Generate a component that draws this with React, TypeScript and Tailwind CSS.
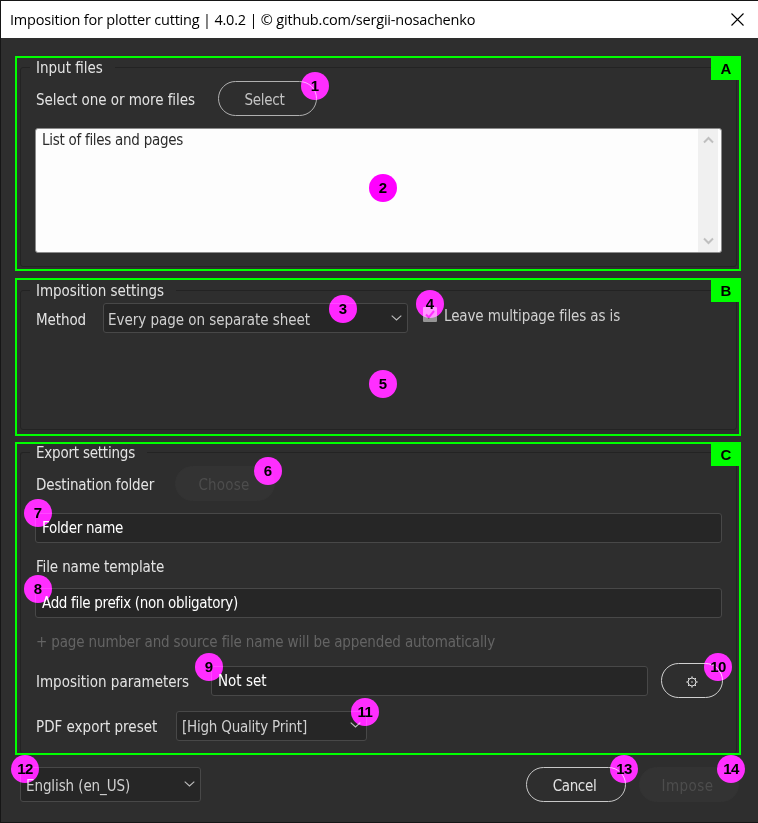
import type { ReactNode } from "react";

function Badge({ n, pos, solid }: { n: number; pos: string; solid?: boolean }) {
  return (
    <>
      <span className={`absolute size-7 rounded-full bg-[#ff00ff] ${solid ? "" : "mix-blend-screen"} ${pos}`} />
      <span
        className={`absolute flex size-7 items-center justify-center pb-px font-['Liberation_Sans',Arial,sans-serif] text-[15px] leading-none font-bold text-black ${n > 9 ? "tracking-[-0.5px]" : ""} ${pos}`}
      >
        {n}
      </span>
    </>
  );
}

function Frame({ tag, title, titleClass, className, boxClass, children }: {
  tag: string;
  title: string;
  titleClass: string;
  className: string;
  boxClass: string;
  children: ReactNode;
}) {
  return (
    <section className={`relative ml-[14px] w-[726px] border-2 border-[#00ff00] ${className}`}>
      <fieldset className={`ml-[3px] w-[717px] rounded-[3px] border border-[#232323] pl-[15px] ${boxClass}`}>
        <legend className={`-ml-[6px] h-4 bg-[#2e2e2e] pr-3 pl-[6px] leading-[18px] whitespace-nowrap ${titleClass}`}>{title}</legend>
        {children}
      </fieldset>
      <span className="absolute -top-[2px] -right-[2px] flex h-6 w-[30px] items-center justify-center bg-[#00ff00] font-['Liberation_Sans',Arial,sans-serif] text-[15px] leading-none font-bold text-black">
        {tag}
      </span>
    </section>
  );
}

function Chevron({ className = "" }: { className?: string }) {
  return (
    <svg width="11" height="6" viewBox="0 0 11 6" className={className} fill="none" stroke="#bdbdbd" strokeWidth="1.1">
      <path d="M0.7 0.6 L5.5 5 L10.3 0.6" />
    </svg>
  );
}

const field = "flex items-center rounded-[3px] border border-[#484848] bg-[#262626]";
const pill = "flex h-[35px] items-center justify-center rounded-full border pt-[3px]";

export default function App() {
  return (
    <div className="relative flex h-[823px] w-[758px] flex-col overflow-hidden border-t border-b border-l border-[#161616] bg-[#2e2e2e] font-['DejaVu_Sans_Condensed','DejaVu_Sans',sans-serif] text-[15px] leading-5 whitespace-nowrap text-[#e3e3e3]">
      <header className="flex h-[37px] shrink-0 items-center justify-between bg-white pr-[14px] pl-[9px] text-black">
        <h1 className="font-['Open_Sans',sans-serif] text-[14.5px] tracking-[-0.19px]">
          Imposition for plotter cutting | 4.0.2 | © github.com/sergii-nosachenko
        </h1>
        <svg width="13" height="13" viewBox="0 0 13 13" fill="none" stroke="#000" strokeWidth="1.1">
          <path d="M0.5 0.5 L12.5 12.5 M12.5 0.5 L0.5 12.5" />
        </svg>
      </header>

      <Frame tag="A" title="Input files" titleClass="" className="mt-[18px] h-[215px] pt-px" boxClass="h-[208px]">
        <div className="mt-[6px] flex items-center">
          <span className="w-[182px] pt-[3px] tracking-[-0.05px]">Select one or more files</span>
          <button className={`${pill} w-[99px] border-[#b0b0b0] pr-[6px] text-[#c4c4c4] tracking-[-0.25px]`}>Select</button>
        </div>
        <div className="mt-3 -ml-px flex h-[125px] w-[687px] justify-between rounded-[3px] border border-[#8b8b8b] bg-[#fdfdfd]">
          <span className="pt-px pl-[6px] text-[#2b2b2b] tracking-[-0.28px]">List of files and pages</span>
          <div className="mr-[3px] flex w-5 flex-col items-center justify-between bg-[#f0f0f0] py-[7px] text-[#bfbfbf]">
            <svg width="11" height="8" viewBox="0 0 11 8" fill="none" stroke="currentColor" strokeWidth="2">
              <path d="M1 6.5 L5.5 2 L10 6.5" />
            </svg>
            <svg width="11" height="8" viewBox="0 0 11 8" fill="none" stroke="currentColor" strokeWidth="2">
              <path d="M1 1.5 L5.5 6 L10 1.5" />
            </svg>
          </div>
        </div>
      </Frame>

      <Frame tag="B" title="Imposition settings" titleClass="tracking-[-0.04px]" className="mt-[7px] h-[158px] pt-[2px]" boxClass="h-[148px]">
        <div className="mt-[5px] flex items-start">
          <span className="w-[67px] pt-[7px] tracking-[-0.1px]">Method</span>
          <div className={`${field} h-[30px] w-[305px] justify-between pr-[5px] pl-[4px] text-[#d0d0d0]`}>
            <span className="pt-[3px] tracking-[-0.04px]">Every page on separate sheet</span>
            <Chevron />
          </div>
          <span className="mt-1 ml-[15px] flex h-[15px] w-[14px] items-center justify-center rounded-[1px] bg-[#969696]">
            <svg width="10" height="9" viewBox="0 0 10 9" fill="none" stroke="#2e2e2e" strokeWidth="2">
              <path d="M1 4.5 L3.8 7.3 L9 1" />
            </svg>
          </span>
          <span className="ml-[7px] pt-[3px] text-[#d0d0d0] tracking-[-0.11px]">Leave multipage files as is</span>
        </div>
      </Frame>

      <Frame tag="C" title="Export settings" titleClass="tracking-[-0.22px]" className="mt-[6px] h-[313px]" boxClass="h-[309px] border-b-0">
        <div className="mt-[6px] flex items-center">
          <span className="w-[139px] pt-[3px] tracking-[-0.16px]">Destination folder</span>
          <button className={`${pill} w-[100px] border-[#333333] bg-[#333333] pr-[2px] text-[#4d4d4d] tracking-[0.2px]`}>Choose</button>
        </div>
        <div className={`${field} mt-3 -ml-px h-[30px] w-[687px] pl-[6px] text-white`}>
          <span className="tracking-[-0.29px]">Folder name</span>
        </div>
        <p className="mt-[14px] tracking-[-0.12px]">File name template</p>
        <div className={`${field} mt-[11px] -ml-px h-[30px] w-[687px] pl-[6px] text-white`}>
          <span className="tracking-[-0.33px]">Add file prefix (non obligatory)</span>
        </div>
        <p className="mt-[14px] text-[#646464] tracking-[-0.145px]">+ page number and source file name will be appended automatically</p>
        <div className="mt-[11px] flex items-center">
          <span className="w-[175px] pt-[3px]">Imposition parameters</span>
          <div className={`${field} h-[30px] w-[437px] pl-[6px] text-white`}>
            <span>Not set</span>
          </div>
          <button className="ml-[13px] flex h-[35px] w-[62px] items-center justify-center rounded-full border border-[#d0d0d0] pt-[2px] pr-px">
            <svg width="12" height="12" viewBox="0 0 12 12" fill="none" stroke="#e3e3e3">
              <circle cx="6" cy="6" r="4" />
              <path d="M6 0.3V2M6 10v1.7M0.3 6H2M10 6h1.7M2 2l1.2 1.2M8.8 8.8L10 10M10 2L8.8 3.2M3.2 8.8L2 10M5.2 6h1.6" />
            </svg>
          </button>
        </div>
        <div className="mt-[13px] flex items-center">
          <span className="w-[140px] pt-[2px]">PDF export preset</span>
          <div className={`${field} h-[30px] w-[191px] justify-between pr-[5px] pl-[5px] text-[#d0d0d0]`}>
            <span className="pt-[2px] tracking-[-0.22px]">[High Quality Print]</span>
            <Chevron className="-mt-[2px]" />
          </div>
        </div>
      </Frame>

      <footer className="mt-3 flex pr-[19px] pl-[19px]">
        <div className={`${field} h-[35px] w-[181px] justify-between pr-[5px] pl-[5px] text-[#d0d0d0]`}>
          <span className="pt-[3px] tracking-[-0.1px]">English (en_US)</span>
          <Chevron className="-mt-[2px]" />
        </div>
        <button className={`${pill} ml-[325px] w-[100px] border-[#c8c8c8] pr-[3px] tracking-[-0.35px]`}>Cancel</button>
        <button className={`${pill} ml-[13px] w-[100px] border-[#333333] bg-[#333333] pr-[3px] text-[#4d4d4d] tracking-[0.45px]`}>Impose</button>
      </footer>

      <Badge n={1} pos="left-[300px] top-[71px]" />
      <Badge n={2} pos="left-[368px] top-[173px]" solid />
      <Badge n={3} pos="left-[328px] top-[294px]" />
      <Badge n={4} pos="left-[415px] top-[289px]" />
      <Badge n={5} pos="left-[368px] top-[369px]" />
      <Badge n={6} pos="left-[253px] top-[456px]" />
      <Badge n={7} pos="left-[23px] top-[498px]" />
      <Badge n={8} pos="left-[23px] top-[574px]" />
      <Badge n={9} pos="left-[194px] top-[652px]" />
      <Badge n={10} pos="left-[703px] top-[652px]" />
      <Badge n={11} pos="left-[350px] top-[697px]" />
      <Badge n={12} pos="left-[10px] top-[754px]" />
      <Badge n={13} pos="left-[609px] top-[754px]" />
      <Badge n={14} pos="left-[716px] top-[754px]" />
    </div>
  );
}
